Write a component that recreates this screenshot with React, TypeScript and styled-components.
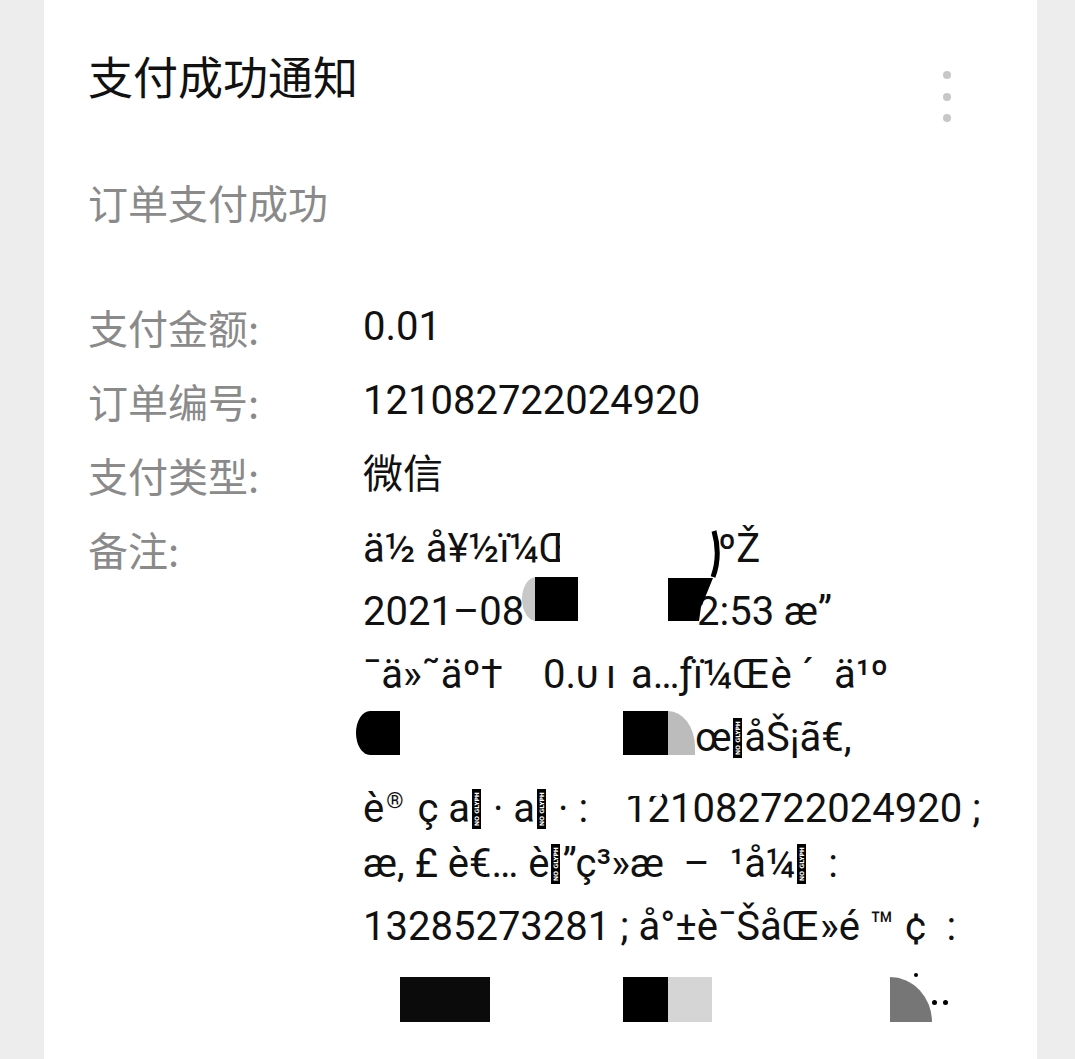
import React from "react";
import styled, { createGlobalStyle } from "styled-components";

const Global = createGlobalStyle`
  html, body { margin: 0; padding: 0; }
  body {
    background: #ededed;
    font-family: Roboto, "Noto Sans CJK SC", sans-serif;
    overflow: hidden;
  }
`;

const Page = styled.div`
  display: flex;
  padding: 0 38px 0 44px;
  height: 1059px;
  box-sizing: border-box;
`;

const Card = styled.main`
  flex: 1;
  background: #ffffff;
  padding: 46px 0 0 44px;
  box-sizing: border-box;
  overflow: hidden;
`;

const Header = styled.header`
  display: flex;
  justify-content: space-between;
  align-items: flex-start;
  padding-right: 86px;
`;

const Title = styled.h1`
  margin: 0;
  font-family: "Noto Sans CJK SC", sans-serif;
  font-size: 45px;
  line-height: 60px;
  font-weight: 400;
  color: #111111;
`;

const MoreButton = styled.button`
  margin-top: 25px;
  padding: 0;
  border: 0;
  background: none;
  display: flex;
  flex-direction: column;
  gap: 13.5px;
`;

const Dot = styled.span`
  width: 8px;
  height: 8px;
  border-radius: 50%;
  background: #c7c7c7;
`;

const Subtitle = styled.p`
  margin: 50px 0 0;
  font-family: "Noto Sans CJK SC", sans-serif;
  font-size: 40px;
  line-height: 60px;
  color: #8a8a8a;
`;

const Fields = styled.dl`
  margin: 58px 0 0;
  display: grid;
  grid-template-columns: 275px 1fr;
  grid-auto-rows: 74px;
`;

const Label = styled.dt`
  margin: 0;
  font-family: "Noto Sans CJK SC", sans-serif;
  font-size: 40px;
  line-height: 74px;
  color: #8a8a8a;
  white-space: nowrap;
`;

const Value = styled.dd`
  margin: 0;
  font-family: Roboto, "Noto Sans CJK SC", sans-serif;
  font-size: 40px;
  line-height: 74px;
  color: #111111;
  white-space: nowrap;
`;

const Remark = styled.dd`
  margin: 0;
  position: relative;
  padding-top: 5px;
  grid-row: span 7;
  font-family: Roboto, "DejaVu Sans", sans-serif;
  font-size: 40px;
  color: #111111;
`;

const Line = styled.div`
  height: 63px;
  line-height: 63px;
  white-space: pre;
`;

const Seg = styled.span<{ $w?: number }>`
  display: inline-block;
  width: ${(p) => (p.$w !== undefined ? `${p.$w}px` : "auto")};
`;

const Sup = styled.span`
  font-size: 22px;
  vertical-align: 14px;
  margin: 0 4px 0 2px;
`;

const NoGlyph = styled.span`
  display: inline-block;
  width: 9px;
  height: 40px;
  margin: 0 2px;
  background: #000;
  vertical-align: -7px;
  position: relative;
  overflow: hidden;
  &::after {
    content: "NO GLYPH";
    position: absolute;
    left: 50%;
    top: 50%;
    transform: translate(-50%, -50%) rotate(-90deg);
    font-family: "DejaVu Sans", sans-serif;
    font-size: 6px;
    line-height: 6px;
    color: #fff;
    white-space: nowrap;
    font-weight: 700;
  }
`;

const Redact = styled.span<{
  $x: number;
  $y: number;
  $w: number;
  $h: number;
  $c: string;
  $r?: string;
}>`
  position: absolute;
  left: ${(p) => p.$x}px;
  top: ${(p) => p.$y}px;
  width: ${(p) => p.$w}px;
  height: ${(p) => p.$h}px;
  background: ${(p) => p.$c};
  border-radius: ${(p) => p.$r ?? "0"};
`;

const Scribble = styled.svg<{ $x: number; $y: number }>`
  position: absolute;
  left: ${(p) => p.$x}px;
  top: ${(p) => p.$y}px;
`;

const fields = [
  { label: "支付金额:", value: "0.01" },
  { label: "订单编号:", value: "121082722024920" },
  { label: "支付类型:", value: "微信" },
];

export default function App() {
  return (
    <>
      <Global />
      <Page>
        <Card>
          <Header>
            <Title>支付成功通知</Title>
            <MoreButton aria-label="更多">
              <Dot />
              <Dot />
              <Dot />
            </MoreButton>
          </Header>
          <Subtitle>订单支付成功</Subtitle>
          <Fields>
            {fields.map((f) => (
              <React.Fragment key={f.label}>
                <Label>{f.label}</Label>
                <Value>{f.value}</Value>
              </React.Fragment>
            ))}
            <Label>备注:</Label>
            <Remark>
              <Line>
                <Seg $w={355}>ä½ å¥½ï¼Œ</Seg>
                <Seg>ºŽ</Seg>
              </Line>
              <Line>
                <Seg $w={334}>2021–08</Seg>
                <Seg>2:53 æ”</Seg>
              </Line>
              <Line>
                <Seg $w={180}>¯ä»˜äº†</Seg>
                <Seg>0.01 å…ƒï¼Œè ´  ä¹º</Seg>
              </Line>
              <Line>
                <Seg $w={332} />
                <Seg>
                  œ<NoGlyph />åŠ¡ã€,
                </Seg>
              </Line>
              <Line>
                <Seg $w={262}>
                  è<Sup>®</Sup> ç a<NoGlyph /> · a<NoGlyph /> · :
                </Seg>
                <Seg>121082722024920 ;</Seg>
              </Line>
              <Line>
                æ‚ £ è€… è<NoGlyph />”ç³»æ  –  ¹å¼<NoGlyph />  :
              </Line>
              <Line>13285273281 ; å°±è¯ŠåŒ»é ™ ¢  :</Line>
              <Line />

              <Redact $x={197} $y={10} $w={110} $h={52} $c="#fff" />
              <Redact $x={212} $y={137} $w={82} $h={17} $c="#fff" />
              <Redact $x={258} $y={270} $w={41} $h={14} $c="#fff" />
              <Redact $x={159} $y={65} $w={14} $h={44} $c="#c8c8c8" $r="14px 0 0 14px / 22px 0 0 22px" />
              <Redact $x={172} $y={65} $w={43} $h={44} $c="#000" />
              <Scribble $x={300} $y={15} width={60} height={100} viewBox="0 0 60 100">
                <path d="M51 4 Q58 28 50 50" fill="none" stroke="#000" strokeWidth={5} />
                <path d="M5 51 L50 51 Q44 66 38 80 L36 94 L5 94 Z" fill="#000" />
              </Scribble>
              <Redact $x={-7} $y={199} $w={44} $h={44} $c="#000" $r="14px 0 0 14px / 22px 0 0 22px" />
              <Redact $x={260} $y={199} $w={45} $h={44} $c="#000" />
              <Redact $x={305} $y={199} $w={27} $h={44} $c="#bcbcbc" $r="0 27px 0 0 / 0 36px 0 0" />
              <Redact $x={37} $y={465} $w={90} $h={45} $c="#0b0b0b" />
              <Redact $x={260} $y={465} $w={45} $h={45} $c="#000" />
              <Redact $x={305} $y={465} $w={44} $h={45} $c="#d5d5d5" />
              <Redact $x={527} $y={465} $w={42} $h={45} $c="#767676" $r="0 42px 0 0 / 0 45px 0 0" />
              <Redact $x={551} $y={461} $w={4} $h={4} $c="#000" $r="50%" />
              <Redact $x={569} $y={488} $w={5} $h={5} $c="#000" $r="50%" />
              <Redact $x={580} $y={488} $w={5} $h={5} $c="#000" $r="50%" />
            </Remark>
          </Fields>
        </Card>
      </Page>
    </>
  );
}
